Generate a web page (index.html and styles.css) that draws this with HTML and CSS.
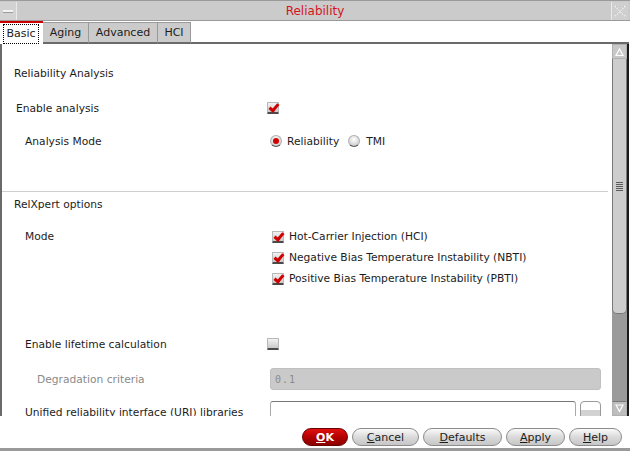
FILE: index.html
```html
<!DOCTYPE html>
<html>
<head>
<meta charset="utf-8">
<link rel="stylesheet" href="styles.css">
</head>
<body>
<div class="window">
  <div class="titlebar">
    <div class="tb-btn tb-min"><span class="dash"></span></div>
    <div class="title">Reliability</div>
    <div class="tb-btn tb-close">
      <svg width="14" height="14" viewBox="0 0 14 14"><path d="M2 2 L12 12 M12 2 L2 12" stroke="#eee" stroke-width="2" stroke-dasharray="1.4 1.2" fill="none"/><path d="M3 2 L12 11 M11 2 L2 11" stroke="#aaa" stroke-width="0.8" fill="none" stroke-dasharray="1 1.5"/></svg>
    </div>
  </div>
  <div class="tabs">
    <div class="tab active"><span class="focus">Basic</span></div>
    <div class="tab">Aging</div>
    <div class="tab">Advanced</div>
    <div class="tab">HCI</div>
    <div class="tab-fill"></div>
  </div>
  <div class="panel">
    <div class="content">
      <div class="row r1"><div class="label l12">Reliability Analysis</div></div>
      <div class="row r2">
        <div class="label l14">Enable analysis</div>
        <div class="ctrl"><span class="cb checked"></span></div>
      </div>
      <div class="row r3">
        <div class="label l23">Analysis Mode</div>
        <div class="ctrl ml3">
          <span class="radio on"></span><span class="opt">Reliability</span>
          <span class="radio tmi"></span><span class="opt">TMI</span>
        </div>
      </div>
      <div class="sep"></div>
      <div class="row r4"><div class="label l12">RelXpert options</div></div>
      <div class="mode">
        <div class="label l23 mode-label">Mode</div>
        <div class="ml5 mode-list">
          <div class="mrow"><span class="cb checked"></span><span class="opt">Hot-Carrier Injection (HCI)</span></div>
          <div class="mrow"><span class="cb checked"></span><span class="opt">Negative Bias Temperature Instability (NBTI)</span></div>
          <div class="mrow"><span class="cb checked"></span><span class="opt">Positive Bias Temperature Instability (PBTI)</span></div>
        </div>
      </div>
      <div class="row r5">
        <div class="label l23">Enable lifetime calculation</div>
        <div class="ctrl"><span class="cb"></span></div>
      </div>
      <div class="row r6">
        <div class="label l35 dim">Degradation criteria</div>
        <div class="ctrl ml3"><div class="field disabled">0.1</div></div>
      </div>
      <div class="row r7">
        <div class="label l23">Unified reliability interface (URI) libraries</div>
        <div class="ctrl ml3 uri">
          <div class="field uri-field"></div>
          <div class="browse">...</div>
        </div>
      </div>
    </div>
    <div class="scrollbar">
      <div class="sb-arrow up"><svg width="13" height="13" viewBox="0 0 13 13"><path d="M3 10.5 L6.5 4 L10 10.5 Z" fill="none" stroke="#fff" stroke-width="1.2"/></svg></div>
      <div class="sb-thumb"><span class="grip"></span></div>
      <div class="sb-track"></div>
      <div class="sb-arrow down"><svg width="13" height="13" viewBox="0 0 13 13"><path d="M3 3 L6.5 9.5 L10 3 Z" fill="none" stroke="#fff" stroke-width="1.2"/></svg></div>
    </div>
  </div>
  <div class="buttons">
    <div class="btn ok"><u>O</u>K</div>
    <div class="btn w67"><u>C</u>ancel</div>
    <div class="btn w79"><u>D</u>efaults</div>
    <div class="btn w59"><u>A</u>pply</div>
    <div class="btn w53"><u>H</u>elp</div>
  </div>
</div>
</body>
</html>
```
FILE: styles.css
```css
* { box-sizing: border-box; }
html, body { margin: 0; padding: 0; background: #fff; }
body { font-family: "DejaVu Sans", sans-serif; font-size: 10.7px; color: #1c1c1c; }

.window { width: 630px; height: 451px; display: flex; flex-direction: column; background: #fff; overflow: hidden; }

/* title bar */
.titlebar { height: 21px; display: flex; border-top: 1px solid #9a9a9a; border-bottom: 1px solid #9a9a9a; background: #cbcbcb; padding-top: 1px; }
.tb-btn { width: 17px; display: flex; align-items: center; justify-content: center; }
.tb-min { border-right: 1px solid #eaeaea; background: #d2d2d2; }
.dash { width: 10px; height: 3px; background: #f4f4f4; border-bottom: 1px solid #9a9a9a; }
.tb-close { border-left: 1px solid #eaeaea; background: #cfcfcf; margin-right: 2px; }
.title { flex: 1; text-align: center; color: #d4141c; font-size: 12px; line-height: 18px; padding-left: 2px; }

/* tabs */
.tabs { height: 23px; display: flex; align-items: stretch; }
.tab { font-size: 11px; display: flex; align-items: center; justify-content: center; padding: 0 8px; background: #cbcbcb; border: 1px solid #9a9a9a; border-left: none; border-bottom: 2px solid #6a6a6a; margin-top: 1px; color: #1c1c1c; }
.tab.active { background: #fff; border: none; border-top: 2px solid #cc0000; margin-top: 0; padding: 0 3px 0 2px; width: 43px; }
.focus { border: 1px dotted #000; padding: 2px 2px 3px 2px; }
.tab:nth-child(2) { width: 46px; }
.tab:nth-child(3) { width: 69px; }
.tab:nth-child(4) { width: 33px; }
.tab-fill { flex: 1; border-bottom: 2px solid #6a6a6a; margin-right: 1px; }

/* panel */
.panel { height: 372px; display: flex; border-left: 2px solid #6a6a6a; border-right: 2px solid #1a1a1a; margin-right: 1px; }
.content { width: 610px; overflow: hidden; padding-top: 19px; }
.row { display: flex; align-items: center; height: 20px; }
.label { width: 265px; flex: none; white-space: nowrap; }
.l12 { padding-left: 12px; }
.l14 { padding-left: 14px; }
.l23 { padding-left: 23px; }
.l35 { padding-left: 35px; }
.dim { color: #8a8a8a; }
.ctrl { display: flex; align-items: center; }
.ml3 { margin-left: 3px; }
.ml5 { margin-left: 5px; }

.r2 { margin-top: 15px; }
.r3 { margin-top: 13px; }
.sep { height: 1px; background: #cfcfcf; margin: 40px 4px 0 0; }
.r4 { margin-top: 2px; }
.mode { display: flex; margin-top: 12px; }
.mode-label { height: 21px; line-height: 21px; }
.mode-list { display: flex; flex-direction: column; }
.mrow { height: 21px; display: flex; align-items: center; }
.r5 { margin-top: 45px; }
.r6 { margin-top: 14px; height: 22px; }
.r7 { margin-top: 11px; height: 22px; align-items: center; }

.opt { margin-left: 5px; white-space: nowrap; }
.radio.tmi { margin-left: 9px; }
.radio.tmi + .opt { margin-left: 6px; }

/* checkbox */
.cb { width: 12px; height: 12px; flex: none; display: inline-block; position: relative; background: linear-gradient(#f2f2f2, #c9c9c9); border: 1px solid #b8b8b8; border-bottom: 2px solid #4a4a4a; border-radius: 1px; }
.cb.checked::after { content: ""; position: absolute; top: -1px; left: 3px; width: 3px; height: 7px; border-right: 3px solid #d10000; border-bottom: 3px solid #d10000; transform: rotate(40deg); transform-origin: 50% 50%; }

/* radio */
.radio { width: 12px; height: 12px; flex: none; border-radius: 50%; display: inline-block; position: relative; background: radial-gradient(circle at 50% 35%, #ffffff, #cfcfcf 75%); border: 1px solid #b0b0b0; border-bottom-color: #555; }
.radio.on::after { content: ""; position: absolute; left: 2px; top: 2px; width: 6px; height: 6px; border-radius: 50%; background: #d00000; }

/* fields */
.field { height: 22px; border-radius: 3px; font-family: "DejaVu Sans Mono", monospace; font-size: 10px; display: flex; align-items: center; padding-left: 4px; }
.field.disabled { width: 331px; background: #cacaca; color: #8a8a8a; border: 1px solid #c0c0c0; letter-spacing: 1px; }
.uri-field { width: 306px; background: #fff; border: 1px solid #aaa; border-top-color: #777; }
.browse { width: 21px; height: 22px; margin-left: 4px; border: 1px solid #999; border-radius: 4px 4px 0 0; background: linear-gradient(#fff 0, #fff 40%, #d0d0d0 40%, #d8d8d8); font-size: 9px; text-align: center; line-height: 30px; overflow: hidden; }

/* scrollbar */
.scrollbar { width: 15px; display: flex; flex-direction: column; background: #9a9a9a; }
.sb-arrow { height: 15px; display: flex; align-items: center; justify-content: center; background: #c8c8c8; border: 1px solid #b0b0b0; }
.sb-arrow.down { border-top: 1px solid #777; background: #bdbdbd; }
.sb-thumb { height: 255px; background: #cdcdcd; border: 1px solid #7a7a7a; border-top: none; border-radius: 0 0 5px 5px; display: flex; align-items: center; justify-content: center; }
.grip { width: 7px; height: 9px; background: repeating-linear-gradient(#5a5a5a 0, #5a5a5a 1px, transparent 1px, transparent 2px); }
.sb-track { flex: 1; }

/* buttons */
.buttons { height: 35px; display: flex; justify-content: flex-end; align-items: flex-start; gap: 4px; padding: 12px 8px 0 0; border-bottom: 3px solid #9a9a9a; }
.btn { height: 18px; border-radius: 9px; border: 1px solid #8c8c8c; background: linear-gradient(#fafafa, #dadada 50%, #c6c6c6); font-size: 11px; display: flex; align-items: center; justify-content: center; color: #1c1c1c; }
.btn.ok { width: 46px; background: linear-gradient(#e01010, #b00000 55%, #8a0000); border-color: #6a0000; color: #fff; font-weight: bold; }
.w67 { width: 67px; }
.w79 { width: 79px; }
.w59 { width: 59px; }
.w53 { width: 53px; }
```
